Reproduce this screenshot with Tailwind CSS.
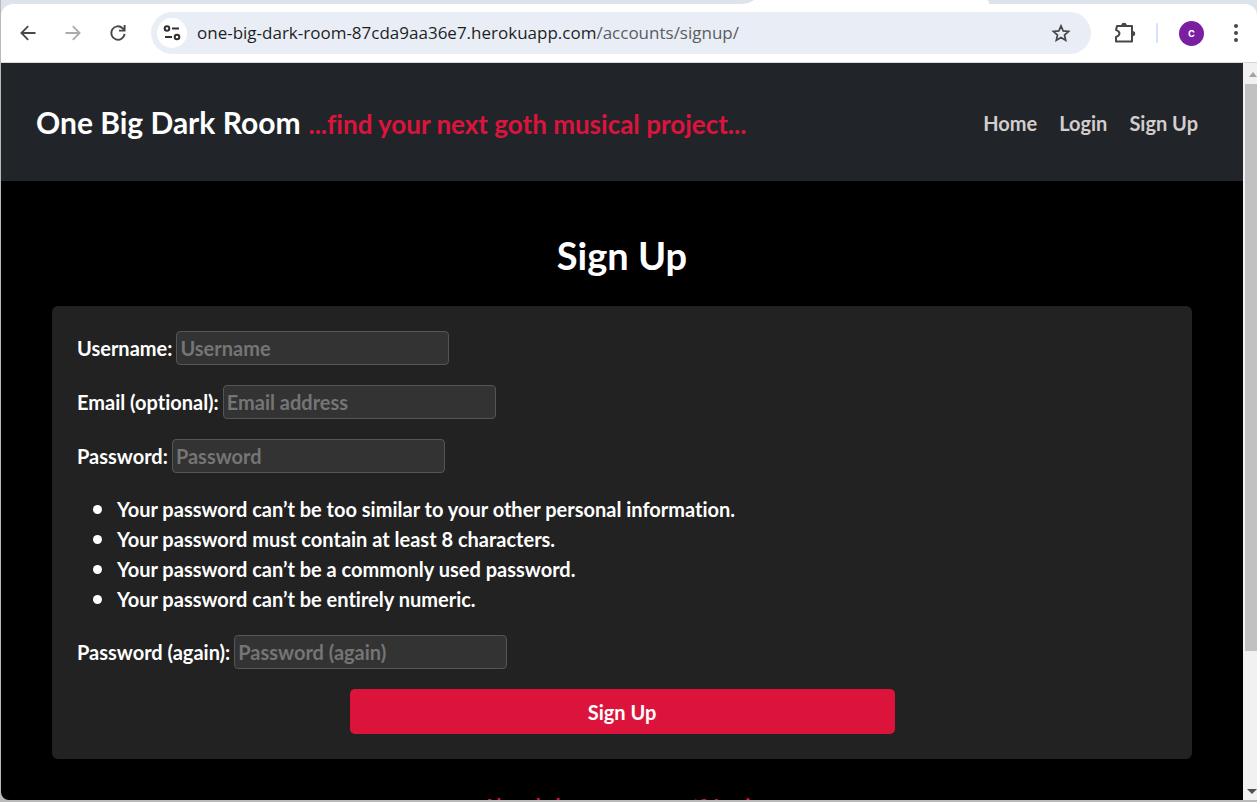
<!DOCTYPE html>
<html lang="en">
<head>
<meta charset="utf-8">
<title>Sign Up</title>
<script src="https://cdn.jsdelivr.net/npm/@tailwindcss/browser@4"></script>
</head>
<body class="bg-[#b9b9b9]">
<div class="flex h-screen flex-col pb-[2px] pl-px">

  <!-- Browser toolbar -->
  <div class="relative shrink-0 bg-[#dde3ea]">
    <div class="flex h-1 justify-between overflow-hidden">
      <div class="w-[754px]"></div>
      <div class="w-[236px] bg-white"></div>
      <div class="w-[268px]"></div>
    </div>
    <svg class="absolute top-0 left-[738px] h-1 w-4" viewBox="0 0 16 4" aria-hidden="true"><path d="M0 4V0h15C12 2.500 7 4 0 4z" fill="#dde3ea"/><path d="M0 4c7 0 12-1.500 15-4h1v4z" fill="#fff"/></svg>
    <svg class="absolute top-0 right-[254px] h-1 w-4" viewBox="0 0 16 4" aria-hidden="true"><path d="M0 0h16v4C8 4 3 2.500 0 0z" fill="#dde3ea"/></svg>
    <div class="flex h-[59px] items-center rounded-t-xl border-b border-[#d5d9dd] bg-white pr-3 pl-[18px]">
      <div class="flex shrink-0 items-center gap-[27px]">
        <button type="button" aria-label="Back" class="block size-[18px]">
          <svg viewBox="0 0 18 18" class="size-[18px]" fill="none" stroke="#474747" stroke-width="1.8"><path d="M16.500 9H3M9.200 2.200 2.400 9l6.800 6.800"/></svg>
        </button>
        <button type="button" aria-label="Forward" class="block size-[18px]" disabled>
          <svg viewBox="0 0 18 18" class="size-[18px]" fill="none" stroke="#ababab" stroke-width="1.8"><path d="M1.500 9H15M8.800 2.200 15.600 9l-6.800 6.800"/></svg>
        </button>
        <button type="button" aria-label="Reload" class="block size-[18px]">
          <svg viewBox="0 0 18 18" class="size-[18px]" fill="none" stroke="#474747" stroke-width="1.9"><path d="M15.600 9.800A6.700 6.700 0 1 1 13.600 4.200L15.500 6.200M15.600 1v5.600H10"/></svg>
        </button>
      </div>
      <div class="ml-6 flex h-[42px] min-w-0 flex-1 items-center rounded-full bg-[#e9eef6] pr-5 pl-1.5">
        <button type="button" aria-label="View site information" class="grid size-[30px] shrink-0 place-items-center rounded-full bg-white">
          <svg viewBox="0 0 18 16" class="h-4 w-[18px]" fill="none" stroke="#303030" stroke-width="2"><circle cx="4" cy="3.500" r="2.300"/><path d="M9 3.500h7M2 12h7"/><circle cx="14" cy="12" r="2.300"/></svg>
        </button>
        <div class="min-w-0 flex-1 truncate pl-2.5 font-['Open_Sans',sans-serif] text-[17px] text-[#1f1f1f]">one-big-dark-room-87cda9aa36e7.herokuapp.com<span class="text-[#5a5d61]">/accounts/signup/</span></div>
        <button type="button" aria-label="Bookmark this tab" class="shrink-0">
          <svg viewBox="0 0 20 20" class="size-5" fill="none" stroke="#474747" stroke-width="1.7"><path d="M10 2.900 12.150 7.900 17.600 8.400 13.500 12 14.700 17.300 10 14.500 5.300 17.300 6.500 12 2.400 8.400 7.850 7.900z"/></svg>
        </button>
      </div>
      <div class="flex shrink-0 items-center pl-[23px]">
        <button type="button" aria-label="Extensions">
          <svg viewBox="0 0 22 22" class="size-[22px]"><path d="M3 3.900h15v15.500H2V14.900c4.600-1.800 4.600-5.200 0-7z" fill="none" stroke="#474747" stroke-width="2" stroke-linejoin="round"/><path d="M7.300 3.500a2.700 2.700 0 0 1 5.400 0zM18.500 8.900a2.700 2.700 0 0 1 0 5.400z" fill="#474747"/></svg>
        </button>
        <div class="ml-5 h-5 w-0.5 rounded-full bg-[#d3e3fd]"></div>
        <button type="button" aria-label="Profile" class="ml-[21px] grid size-[25px] place-items-center rounded-full bg-[#7b1fa2] font-['Roboto',sans-serif] text-[13px] font-medium text-white">c</button>
        <button type="button" aria-label="Menu" class="ml-[23px]">
          <svg viewBox="0 0 18 20" class="h-5 w-[18px]" fill="#474747"><circle cx="9" cy="3" r="2"/><circle cx="9" cy="10" r="2"/><circle cx="9" cy="17" r="2"/></svg>
        </button>
      </div>
    </div>
  </div>

  <!-- Page viewport -->
  <div class="flex min-h-0 flex-1 overflow-hidden rounded-bl-lg">
    <div class="min-w-0 flex-1 overflow-hidden bg-black font-['Lato',sans-serif] text-xl leading-[30px] font-bold text-white [font-variant-ligatures:none]">
      <header class="flex h-[118px] items-center justify-between bg-[#212529] pt-0.5 pr-[45px] pl-[35px]">
        <div class="flex items-baseline gap-2">
          <a href="#" class="text-[30px] leading-10">One Big Dark Room</a>
          <span class="text-[26px] leading-10 text-[#dc143c]">...find your next goth musical project...</span>
        </div>
        <nav class="flex gap-[22px] text-[#d3cdcd]">
          <a href="#">Home</a>
          <a href="#">Login</a>
          <a href="#">Sign Up</a>
        </nav>
      </header>

      <main class="px-[51px] pt-[49px]">
        <h1 class="text-center text-[38px] leading-[50px]">Sign Up</h1>
        <form class="mt-[26px] flex flex-col gap-5 rounded-md bg-[#222222] p-[25px]">
          <div class="flex items-center gap-1">
            <label for="username">Username:</label>
            <input id="username" type="text" placeholder="Username" class="h-[34px] w-[273px] rounded border border-[#555555] bg-[#333333] px-[3px] placeholder:text-[#757575]">
          </div>
          <div class="flex items-center gap-1">
            <label for="email">Email (optional):</label>
            <input id="email" type="email" placeholder="Email address" class="h-[34px] w-[273px] rounded border border-[#555555] bg-[#333333] px-[3px] placeholder:text-[#757575]">
          </div>
          <div class="flex items-center gap-1">
            <label for="password1">Password:</label>
            <input id="password1" type="password" placeholder="Password" class="h-[34px] w-[273px] rounded border border-[#555555] bg-[#333333] px-[3px] placeholder:text-[#757575]">
          </div>
          <ul class="py-px pl-4">
            <li class="flex items-center gap-[15px] before:size-[9px] before:rounded-full before:bg-white">Your password can’t be too similar to your other personal information.</li>
            <li class="flex items-center gap-[15px] before:size-[9px] before:rounded-full before:bg-white">Your password must contain at least 8 characters.</li>
            <li class="flex items-center gap-[15px] before:size-[9px] before:rounded-full before:bg-white">Your password can’t be a commonly used password.</li>
            <li class="flex items-center gap-[15px] before:size-[9px] before:rounded-full before:bg-white">Your password can’t be entirely numeric.</li>
          </ul>
          <div class="flex items-center gap-1">
            <label for="password2">Password (again):</label>
            <input id="password2" type="password" placeholder="Password (again)" class="h-[34px] w-[273px] rounded border border-[#555555] bg-[#333333] px-[3px] placeholder:text-[#757575]">
          </div>
          <button type="submit" class="h-[45px] w-1/2 self-center rounded-[5px] bg-[#dc143c]">Sign Up</button>
        </form>
        <p class="mt-8 text-center"><a href="#" class="text-[#dc143c]">Already have an account? Login</a></p>
      </main>
    </div>

    <!-- Scrollbar -->
    <div class="flex w-3.5 shrink-0 flex-col bg-[#f1f1f1] pl-0.5">
      <div class="flex h-[21px] shrink-0 items-end pb-[7px] pl-1"><svg viewBox="0 0 8 5" class="h-[5px] w-2" fill="#a3a3a3" aria-hidden="true"><path d="M0 5 4 0l4 5z"/></svg></div>
      <div class="h-[567px] bg-[#c1c1c1]"></div>
      <div class="mt-auto flex h-[21px] shrink-0 items-center pl-0.5"><svg viewBox="0 0 10 5" class="mt-1 h-[5px] w-2.5" fill="#505050" aria-hidden="true"><path d="M0 0h10L5 5z"/></svg></div>
    </div>
  </div>
</div>
</body>
</html>
